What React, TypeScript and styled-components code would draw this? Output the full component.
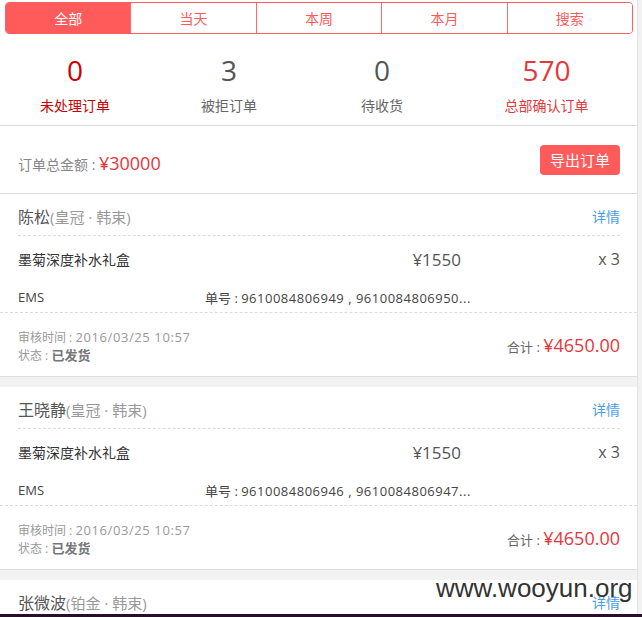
import React from "react";
import styled, { createGlobalStyle } from "styled-components";

const GlobalStyle = createGlobalStyle`
  html, body {
    margin: 0;
    padding: 0;
    background: #f2f2f2;
  }
  body {
    font-family: "Open Sans", "Noto Sans CJK SC", sans-serif;
    -webkit-font-smoothing: antialiased;
  }
  * { box-sizing: border-box; }
`;

const Viewport = styled.div`
  height: 617px;
  overflow: hidden;
  position: relative;
`;

const Page = styled.div`
  width: 638px;
  background: #f2f2f2;
  border-right: 1px solid #e2e2e2;
`;

const Top = styled.div`
  background: #fff;
  padding: 2px 4px 0 5px;
`;

const Tabs = styled.div`
  display: flex;
  height: 32px;
  border: 1px solid #ff5f5f;
  border-radius: 4px;
  overflow: hidden;
`;

const Tab = styled.div<{ $active?: boolean }>`
  flex: 1;
  display: flex;
  align-items: center;
  justify-content: center;
  font-size: 14px;
  color: ${(p) => (p.$active ? "#ffffff" : "#ff5b5b")};
  background: ${(p) => (p.$active ? "#ff5b5b" : "#ffffff")};
  & + & {
    border-left: 1px solid #ff6a6a;
  }
`;

const Stats = styled.div`
  display: grid;
  grid-template-columns: 150px 158px 148px 1fr;
  background: #fff;
  padding: 18px 0 9px;
`;

const Stat = styled.div`
  display: flex;
  flex-direction: column;
  align-items: center;
`;

const StatNum = styled.div<{ $color: string }>`
  font-size: 28px;
  line-height: 36px;
  color: ${(p) => p.$color};
`;

const StatLabel = styled.div<{ $color: string }>`
  margin-top: 8px;
  font-size: 14px;
  line-height: 20px;
  color: ${(p) => p.$color};
`;

const Summary = styled.div`
  display: flex;
  align-items: center;
  justify-content: space-between;
  height: 69px;
  padding: 0 17px 0 18px;
  background: #fff;
  border-top: 1px solid #dedede;
  border-bottom: 1px solid #dedede;
`;

const SumText = styled.div`
  padding-top: 6px;
  font-size: 14px;
  color: #888;
  display: flex;
  align-items: baseline;
  white-space: pre;
`;

const SumValue = styled.span`
  font-size: 18px;
  color: #e8353a;
`;

const ExportButton = styled.button`
  width: 80px;
  height: 30px;
  border: none;
  border-radius: 4px;
  background: #ff5b5b;
  color: #fff;
  font-family: inherit;
  font-size: 15px;
  padding: 0;
`;

const Card = styled.div`
  background: #fff;
  border-bottom: 1px solid #dedede;
  & + & {
    margin-top: 10px;
  }
`;

const CardHead = styled.div`
  margin: 0 17px 0 18px;
  height: 42px;
  padding-top: 3px;
  display: flex;
  align-items: center;
  justify-content: space-between;
  border-bottom: 1px dashed #dcdcdc;
`;

const Name = styled.div`
  font-size: 16px;
  color: #555;
  white-space: pre;
`;

const Level = styled.span`
  font-size: 15px;
  color: #999;
`;

const Detail = styled.a`
  font-size: 14px;
  color: #4aa0e8;
  text-decoration: none;
`;

const ProductRow = styled.div`
  margin: 0 17px 0 18px;
  height: 46px;
  display: grid;
  grid-template-columns: 1fr auto 159px;
  align-items: center;
`;

const ProductName = styled.div`
  font-size: 14px;
  color: #333;
`;

const Price = styled.div`
  font-size: 17px;
  color: #555;
`;

const Qty = styled.div`
  font-size: 16px;
  color: #555;
  text-align: right;
`;

const ShipRow = styled.div`
  padding: 0 17px 0 18px;
  height: 31px;
  display: grid;
  grid-template-columns: 187px 1fr;
  align-items: center;
  border-bottom: 1px dashed #dcdcdc;
`;

const ShipText = styled.div`
  font-size: 13px;
  color: #444;
  white-space: pre;
`;

const Num = styled.span<{ $spacing?: number }>`
  font-size: 13px;
  letter-spacing: ${(p) => p.$spacing ?? 0}px;
`;

const CardFoot = styled.div`
  height: 63px;
  padding: 0 17px 0 18px;
  display: flex;
  align-items: center;
  justify-content: space-between;
`;

const Meta = styled.div`
  display: grid;
  grid-auto-rows: 18px;
  align-items: center;
  margin-top: 2px;
  font-size: 12px;
  line-height: 18px;
  color: #999;
  white-space: pre;
`;

const MetaLine = styled.div`
  height: 18px;
  display: flex;
  align-items: baseline;
`;

const Strong = styled.span`
  font-size: 13px;
  font-weight: bold;
  color: #777;
`;

const Total = styled.div`
  font-size: 13px;
  color: #666;
  display: flex;
  align-items: baseline;
  white-space: pre;
`;

const TotalValue = styled.span`
  font-size: 18px;
  color: #e8353a;
`;

const Watermark = styled.div`
  position: absolute;
  left: 436px;
  top: 575px;
  font-family: "Liberation Sans", sans-serif;
  font-size: 26px;
  line-height: 1;
  color: #333;
  pointer-events: none;
`;

const BottomBar = styled.div`
  position: absolute;
  left: 0;
  right: 0;
  bottom: 0;
  height: 3px;
  background: #2a0d28;
`;

const tabs = ["全部", "当天", "本周", "本月", "搜索"];

const stats = [
  { num: "0", label: "未处理订单", numColor: "#cc0000", labelColor: "#cc0000" },
  { num: "3", label: "被拒订单", numColor: "#555555", labelColor: "#666666" },
  { num: "0", label: "待收货", numColor: "#555555", labelColor: "#666666" },
  { num: "570", label: "总部确认订单", numColor: "#e4393c", labelColor: "#e4393c" },
];

const orders = [
  { name: "陈松", level: "皇冠 · 韩束", nos: "9610084806949 , 9610084806950..." },
  { name: "王晓静", level: "皇冠 · 韩束", nos: "9610084806946 , 9610084806947..." },
  { name: "张微波", level: "铂金 · 韩束", nos: "9610084806943 , 9610084806944..." },
];

export default function App() {
  return (
    <>
      <GlobalStyle />
      <Viewport>
        <Page>
          <Top>
            <Tabs>
              {tabs.map((t, i) => (
                <Tab key={t} $active={i === 0}>
                  {t}
                </Tab>
              ))}
            </Tabs>
          </Top>
          <Stats>
            {stats.map((s) => (
              <Stat key={s.label}>
                <StatNum $color={s.numColor}>{s.num}</StatNum>
                <StatLabel $color={s.labelColor}>{s.label}</StatLabel>
              </Stat>
            ))}
          </Stats>
          <Summary>
            <SumText>
              {"订单总金额 : "}
              <SumValue>¥30000</SumValue>
            </SumText>
            <ExportButton>导出订单</ExportButton>
          </Summary>
          {orders.map((o) => (
            <Card key={o.name}>
              <CardHead>
                <Name>
                  {o.name}
                  <Level>({o.level})</Level>
                </Name>
                <Detail>详情</Detail>
              </CardHead>
              <ProductRow>
                <ProductName>墨菊深度补水礼盒</ProductName>
                <Price>¥1550</Price>
                <Qty>x 3</Qty>
              </ProductRow>
              <ShipRow>
                <ShipText>EMS</ShipText>
                <ShipText>
                  {"单号 : "}
                  <Num $spacing={0.5}>{o.nos}</Num>
                </ShipText>
              </ShipRow>
              <CardFoot>
                <Meta>
                  <MetaLine>
                    {"审核时间 : "}
                    <Num $spacing={0.6}>2016/03/25 10:57</Num>
                  </MetaLine>
                  <MetaLine>
                    {"状态 : "}
                    <Strong>已发货</Strong>
                  </MetaLine>
                </Meta>
                <Total>
                  {"合计 : "}
                  <TotalValue>¥4650.00</TotalValue>
                </Total>
              </CardFoot>
            </Card>
          ))}
        </Page>
        <Watermark>www.wooyun.org</Watermark>
        <BottomBar />
      </Viewport>
    </>
  );
}
